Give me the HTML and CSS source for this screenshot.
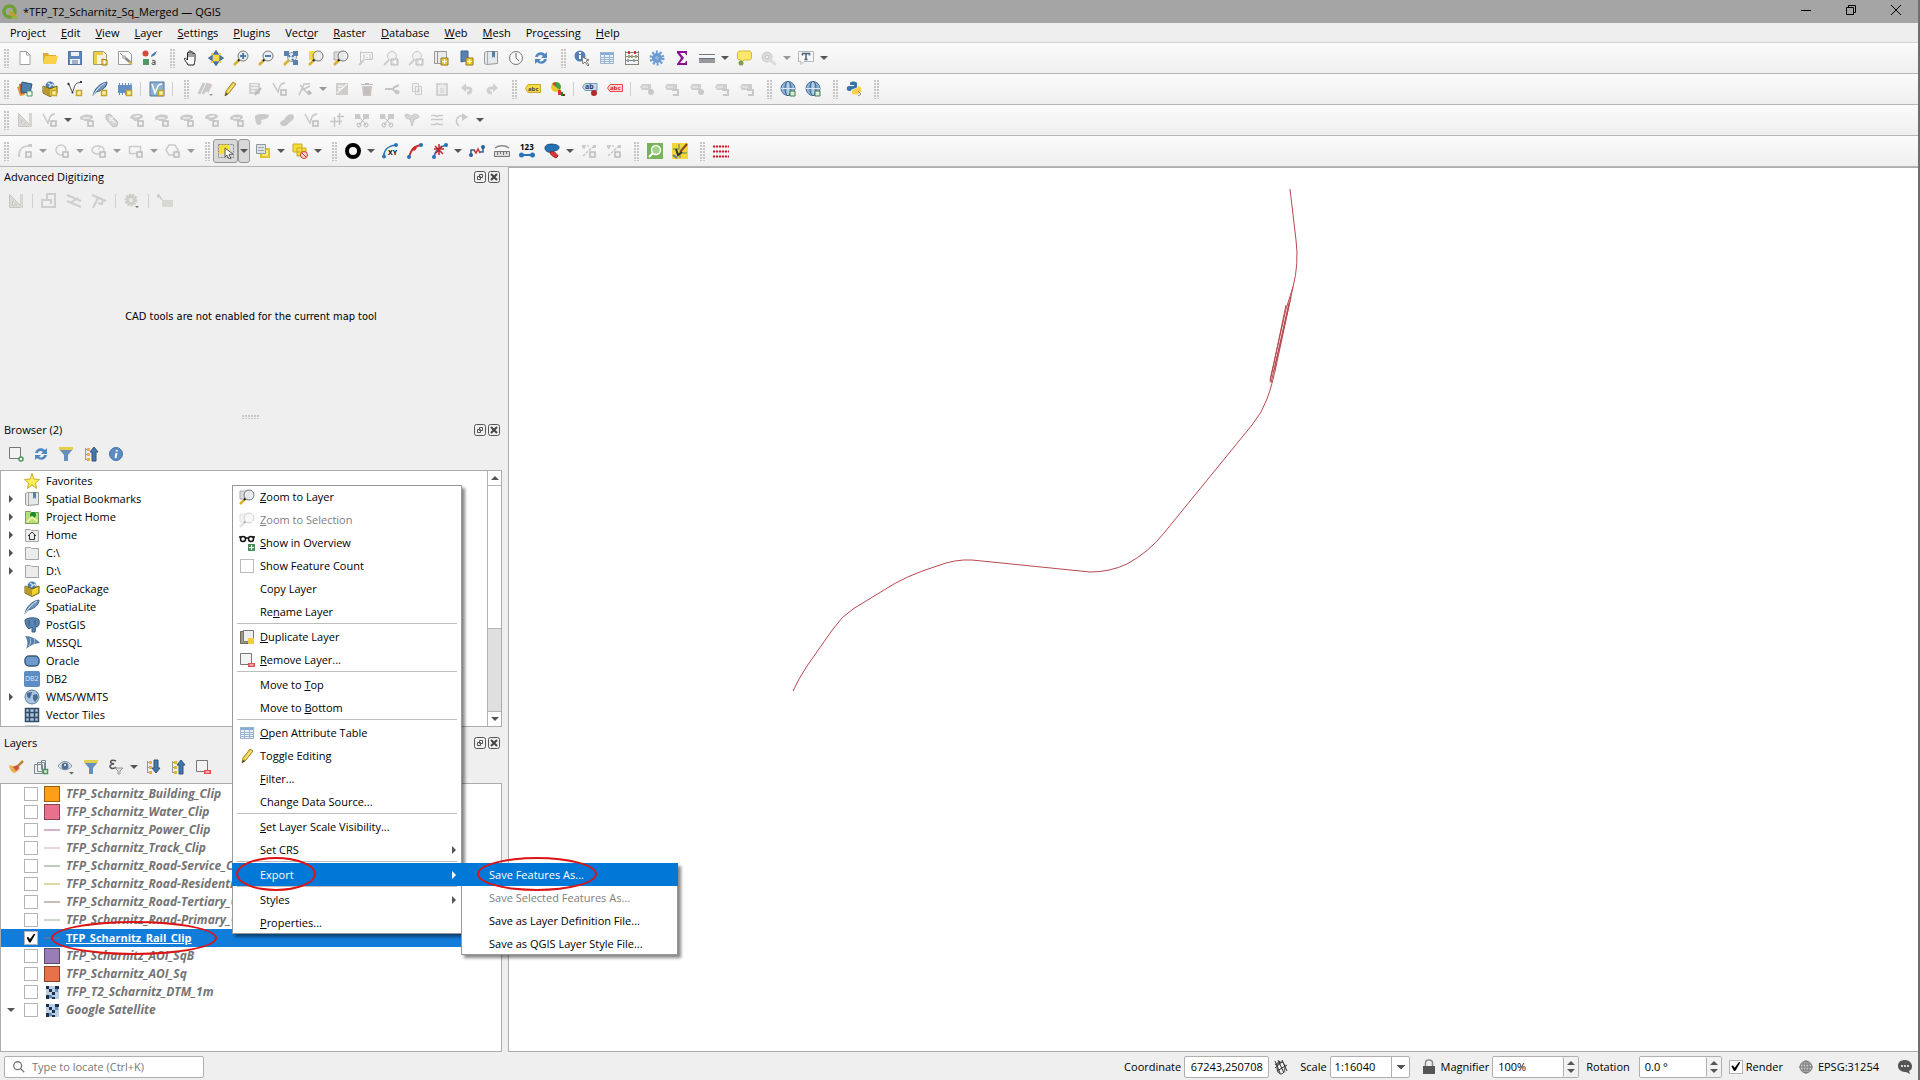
FILE: index.html
```html
<!DOCTYPE html>
<html lang="en">
<head>
<meta charset="utf-8">
<title>*TFP_T2_Scharnitz_Sq_Merged — QGIS</title>
<link rel="stylesheet" href="styles.css">
</head>
<body>
<svg class="defs" aria-hidden="true">
  <symbol id="qgis" viewBox="0 0 16 16"><circle cx="7.500" cy="7.500" r="5.500" fill="none" stroke="#6fa035" stroke-width="3.500"/><path d="M7 7h3l5 5v3h-3L7 10z" fill="#8fb93c"/><path d="M8 8l4 4" stroke="#ee8a2b" stroke-width="2"/></symbol>
  <!-- project -->
  <symbol id="new" viewBox="0 0 16 16"><path d="M3 1.500h6.500l3.500 3.500v9.500H3z" fill="#fff" stroke="#a0a0a0"/><path d="M9.500 1.500V5H13" fill="none" stroke="#a0a0a0"/></symbol>
  <symbol id="open" viewBox="0 0 16 16"><path d="M1 3h5l1 2h7v8H1z" fill="#e0ac2b"/><path d="M3 6h13l-2 8H1z" fill="#fbd14b"/></symbol>
  <symbol id="save" viewBox="0 0 16 16"><path d="M1 1h13l1 1v13H1z" fill="#5c87c0"/><path d="M4 1h8v5H4zM3 9h10v6H3z" fill="#eceff3"/><path d="M5 11h6M5 13h6M1.500 1.500h13v13h-13z" fill="none" stroke="#52749f"/></symbol>
  <symbol id="layout" viewBox="0 0 16 16"><path d="M1.500 1.500h10l3 3v10h-13z" fill="#f7f2df" stroke="#9b9b80"/><path d="M2 2h3v12H2zM2 2h9v3H2z" fill="#f0cd46"/><path d="M10 9l5 1v5h-5z" fill="#f4d33a" stroke="#9a7a16"/><path d="M12.500 10v4M10.500 12h4" stroke="#fff"/></symbol>
  <symbol id="layoutmgr" viewBox="0 0 16 16"><path d="M1.500 1.500h10l3 3v10h-13z" fill="#fbfbfb" stroke="#9a9a9a"/><path d="M3 3l10 10" stroke="#9a9a9a"/><path d="M7 7l7 6" stroke="#888" stroke-width="2.500"/><circle cx="7" cy="7" r="2" fill="#bbb"/><path d="M12 12l3 2" stroke="#e0bd37" stroke-width="2"/></symbol>
  <symbol id="style" viewBox="0 0 16 16"><circle cx="3.500" cy="3.500" r="3" fill="#cf4b3c"/><path d="M1 9h6v6H1z" fill="#4f9a62"/><path d="M9 7c0-3 3-4 6-6-1 3-2 5-6 6z" fill="#4f7ead"/><path d="M10 11c1-1 3-1 3 0v4M13 12.500c-4-.5-4 2.500-1 2l1-1" fill="none" stroke="#444"/></symbol>
  <!-- map navigation -->
  <symbol id="hand" viewBox="0 0 16 16"><path d="M5 15C4 12 1 10 1.500 8.500c1-1 2 .5 3 1.500V3c0-1 1.500-1 1.500 0V1.500c0-1 2-1 2 0v1c0-1 2-1 2 0V4c0-1 2-1 2 0v6c0 2-1 3-1 5z" fill="#fff" stroke="#222"/><path d="M6 3v4M8 2v5M10 3v4" stroke="#444"/></symbol>
  <symbol id="pan" viewBox="0 0 16 16"><path d="M5 5h6v6H5z" fill="#f4d944"/><path d="M8 1l2 3H6zM8 15l2-3H6zM1 8l3-2v4zM15 8l-3-2v4z" fill="#5f82ab" stroke="#4a6d97" stroke-width="1.500"/><path d="M3 3h2v2H3zM11 3h2v2h-2zM3 11h2v2H3zM11 11h2v2h-2z" fill="#f0d040"/></symbol>
  <symbol id="glass" viewBox="0 0 16 16"><path d="M1 15l5-5" stroke="#d8b12d" stroke-width="2.500"/><path d="M5 11l2-2" stroke="#222" stroke-width="2"/><circle cx="10" cy="6" r="5" fill="#e9edf1" fill-opacity=".85" stroke="#777"/></symbol>
  <symbol id="zin" viewBox="0 0 16 16"><use href="#glass"/><path d="M10 3v6M7 6h6" stroke="#4d7cb3" stroke-width="2"/></symbol>
  <symbol id="zout" viewBox="0 0 16 16"><use href="#glass"/><path d="M7 6h6" stroke="#4d7cb3" stroke-width="2"/></symbol>
  <symbol id="zfull" viewBox="0 0 16 16"><path d="M1 15l7-7" stroke="#d8b12d" stroke-width="2.500"/><circle cx="9" cy="7" r="4.500" fill="#e7ebef" stroke="#999"/><path d="M1 1h5v5H1zM10 1h5v5h-5zM10 10h5v5h-5z" fill="#5b80ae"/><path d="M4 4l3 3M12 4L9 7M12 12L9 9" stroke="#5b80ae" stroke-width="2"/></symbol>
  <symbol id="zsel" viewBox="0 0 16 16"><path d="M1 1h8v9H1z" fill="#f5da38"/><use href="#glass"/></symbol>
  <symbol id="zlay" viewBox="0 0 16 16"><path d="M1 2h9v8H1z" fill="#ddd" stroke="#aaa"/><use href="#glass"/></symbol>
  <symbol id="z11" viewBox="0 0 16 16"><path d="M1 15l5-5" stroke="#ccc" stroke-width="2"/><path d="M2.500 1.500v12M2.500 2.500h12v7h-8M6 4v5M9 4v1M9 7v1M12 4v5" stroke="#c4c4c4" fill="none"/></symbol>
  <symbol id="zprev" viewBox="0 0 16 16"><path d="M1 15l5-5" stroke="#ccc" stroke-width="2"/><circle cx="9" cy="6" r="4.500" fill="#f2f2f2" stroke="#c6c6c6"/><path d="M8 9h7v6H8z" fill="#ddd" stroke="#bbb"/><path d="M13 10l-3 2 3 2" fill="#fff"/></symbol>
  <symbol id="newmap" viewBox="0 0 16 16"><path d="M1.500 1.500h12v12h-12z" fill="#eaeaea" stroke="#999"/><path d="M4.500 2v11" stroke="#999"/><path d="M8 8h7v7H8z" fill="#ecc934" stroke="#9a7a16"/><path d="M11.500 9v5M9 11.500h5" stroke="#fff"/></symbol>
  <symbol id="newbm" viewBox="0 0 16 16"><path d="M3 1h7v12l-3-2-4 1z" fill="#5583b9" stroke="#41648e"/><path d="M8 8h7v7H8z" fill="#ecc934" stroke="#9a7a16"/><path d="M11.500 9v5M9 11.500h5" stroke="#fff"/></symbol>
  <symbol id="bm" viewBox="0 0 16 16"><path d="M1.500 2.500l2-1h11v12l-11 1-2-1z" fill="#e6e9ec" stroke="#999"/><path d="M4.500 2v12" stroke="#aaa"/><path d="M9 1h3v7l-1.500-1.500L9 8z" fill="#577fab"/></symbol>
  <symbol id="clock" viewBox="0 0 16 16"><circle cx="8" cy="8" r="6.500" fill="#f8f8f8" stroke="#777"/><path d="M8 3v5l3 3" fill="none" stroke="#666"/></symbol>
  <symbol id="refresh" viewBox="0 0 16 16"><path d="M2 7c1-5 7-6 10-3l2-2v6H8l2-2C8 4 5 5 5 7zM14 9c-1 5-7 6-10 3l-2 2V9h6l-2 2c2 1 5 0 5-2z" fill="#4f87c3"/></symbol>
  <!-- attributes -->
  <symbol id="ident" viewBox="0 0 16 16"><circle cx="6" cy="6" r="5.500" fill="#557fb6"/><path d="M6 2v2M6 5v4" stroke="#fff" stroke-width="2"/><path d="M8 7l7 3-3 1 3 4-1 1-3-4-2 2z" fill="#fff" stroke="#777"/></symbol>
  <symbol id="table" viewBox="0 0 16 16"><path d="M1 2h14v12H1z" fill="#eaf1f8"/><path d="M1 2h14v3H1z" fill="#80aad7"/><path d="M1.500 2.500h13v11h-13zM1 7.500h14M1 9.500h14M1 11.500h14M5.500 2v12M10.500 2v12" fill="none" stroke="#9cb4cd"/></symbol>
  <symbol id="stats" viewBox="0 0 16 16"><path d="M1.500 1v14M14.500 1v14M1 2.500h14M1 6.500h14M1 10.500h14M1 14.500h14" stroke="#87877f"/><path d="M4 2.500h3M10 2.500h3" stroke="#c34" stroke-width="3" stroke-dasharray="2 1"/><path d="M4 6.500h5M11 6.500h2" stroke="#9a7" stroke-width="3" stroke-dasharray="2 1"/><path d="M3 10.500h3M9 10.500h3" stroke="#8aa4ae" stroke-width="3" stroke-dasharray="2 1"/></symbol>
  <symbol id="gear" viewBox="0 0 16 16"><circle cx="8" cy="8" r="4" fill="#6b9bd2" stroke="#6b9bd2" stroke-width="2"/><circle cx="8" cy="8" r="6" fill="none" stroke="#6b9bd2" stroke-width="3" stroke-dasharray="2 1.770"/><circle cx="8" cy="8" r="2" fill="#8eb5de"/></symbol>
  <symbol id="sigma" viewBox="0 0 16 16"><path d="M3 1h10v4h-1l-1-2H6l4 5-4 5h5l1-2h1v4H3v-1l4-6-4-5z" fill="#8a1193"/></symbol>
  <symbol id="measure" viewBox="0 0 16 16"><path d="M0 4.500h16" stroke="#777"/><path d="M0 8h16v5H0z" fill="#999"/><path d="M0 8.500h16" stroke="#5d7590"/></symbol>
  <symbol id="tip" viewBox="0 0 16 16"><path d="M3 1h11l1.500 1.500v6L14 10H8l-4 4 1-4H3L1.500 8.500v-6z" fill="#fae76b" stroke="#d3b938"/><circle cx="5" cy="13" r="2.500" fill="#7f9b54"/></symbol>
  <symbol id="loc" viewBox="0 0 16 16"><circle cx="6" cy="7" r="5" fill="#ddd" stroke="#ccc"/><circle cx="6" cy="7" r="2" fill="#eee" stroke="#c4c4c4"/><path d="M9 10l6 5" stroke="#ddd" stroke-width="3"/></symbol>
  <symbol id="text" viewBox="0 0 16 16"><path d="M.5 1.500h15v10H6l-3 3v-3H.5z" fill="#f5f6f7" stroke="#b2b7bd"/><path d="M4 3.500h8M4.500 3v2.500M11.500 3v2.500M8 4v6M6.500 9.500h3" stroke="#4d6277" stroke-width="1.500"/></symbol>
  <!-- data sources -->
  <symbol id="dsm" viewBox="0 0 16 16"><path d="M0 6l5-1 3 9-5 1z" fill="#e49a2c"/><path d="M2 3l6-1 2 10-6 1z" fill="#c9572e"/><path d="M5 1l10 2-2 9-9-1z" fill="#4c7fae" stroke="#34587d"/><path d="M10 10h5v5h-5z" fill="#eef8ee" stroke="#4a9659"/></symbol>
  <symbol id="gpkg" viewBox="0 0 16 16"><circle cx="8" cy="5" r="4.500" fill="#4c7fae"/><path d="M6 2l3 2-2 2M10 3l2 2" stroke="#d3e2ef" stroke-width="1.500" fill="none"/><path d="M1 5l7 3 7-3v7l-7 3.500L1 12z" fill="#f3d234" stroke="#6b5a11"/><path d="M1 5l7 3.500V15l-7-3.500z" fill="#b9992a"/></symbol>
  <symbol id="plus" viewBox="0 0 16 16"><path d="M9.500 9.500h5v5h-5z" fill="#f9f0a2" stroke="#c3a530" stroke-width="1.500"/></symbol>
  <symbol id="gpkgn" viewBox="0 0 16 16"><use href="#gpkg"/><use href="#plus"/></symbol>
  <symbol id="shp" viewBox="0 0 16 16"><path d="M1.500 2.500l4 9 2-6c1-3 3-4 6-4" fill="none" stroke="#555"/><path d="M1 2l1 2M5 11l1 1M13 1h2" stroke="#335" stroke-width="2"/><use href="#plus"/></symbol>
  <symbol id="feather" viewBox="0 0 16 16"><path d="M1 15C2 8 8 2 15 1c0 5-5 9-11 10z" fill="#7096c0" stroke="#41648e"/><path d="M1 15C4 9 8 5 13 2" stroke="#dfeaf5" fill="none"/></symbol>
  <symbol id="feathern" viewBox="0 0 16 16"><use href="#feather"/><use href="#plus"/></symbol>
  <symbol id="mem" viewBox="0 0 16 16"><path d="M1 4h14v8H1z" fill="#628fc5"/><path d="M2.500 2v12M5.500 2v12M8.500 2v12M11.500 2v12M14 2v8" stroke="#628fc5"/><use href="#plus"/></symbol>
  <symbol id="virt" viewBox="0 0 16 16"><path d="M1 1h14v14H1z" fill="#8ab0d2" stroke="#51789f"/><path d="M3 3l3 9 3-7c1-2 2-2 4-2" fill="none" stroke="#fff" stroke-width="1.500"/><use href="#plus"/></symbol>
  <!-- editing -->
  <symbol id="edits" viewBox="0 0 16 16"><path d="M2 13L7 2M6 13l5-11M10 11l4-8" stroke="#cdc8c8" stroke-width="3"/><path d="M12 13h4l-2 2z" fill="#999"/></symbol>
  <symbol id="pencil" viewBox="0 0 16 16"><path d="M4 10l7-9 3 2-7 9-4 3z" fill="#e9cb46" stroke="#a58a2e"/><path d="M3 15l1-3 2 1z" fill="#333"/><path d="M6 11l6-8" stroke="#fff0a0"/></symbol>
  <symbol id="gsave" viewBox="0 0 16 16"><path d="M2 2h11v11H2z" fill="#d0d0d0"/><path d="M4 4h7M4 7h7M4 10h4" stroke="#f4f4f4" stroke-width="1.500"/><path d="M8 14l6-7" stroke="#bbb" stroke-width="2"/></symbol>
  <symbol id="gplus" viewBox="0 0 16 16"><path d="M9 9h5v5H9z" fill="#f0f0f0" stroke="#bcbcbc" stroke-width="1.500"/></symbol>
  <symbol id="gv" viewBox="0 0 16 16"><path d="M1 2l5 9 2-6c1-2 2-3 5-3" fill="none" stroke="#c6c6c6" stroke-width="1.500"/><use href="#gplus"/></symbol>
  <symbol id="gvtx" viewBox="0 0 16 16"><path d="M2 14L7 3h6M3 4l9 10M5 9l8-4" fill="none" stroke="#c6c6c6" stroke-width="1.500"/><path d="M11 10l3 3" stroke="#bbb" stroke-width="3"/></symbol>
  <symbol id="gmod" viewBox="0 0 16 16"><path d="M2 2h12v12H2z" fill="#cfcdc9"/><path d="M3 12L13 3M4 5h5M4 8h3" stroke="#f4f4f4" stroke-width="1.500"/></symbol>
  <symbol id="gtrash" viewBox="0 0 16 16"><path d="M3 5h10l-1 10H4z" fill="#ccc3c3"/><path d="M2 3.500h12M6 2.500h4M6 7v6M8 7v6M10 7v6" stroke="#bbb"/></symbol>
  <symbol id="gcut" viewBox="0 0 16 16"><path d="M1 8h9M9 7l6-3M9 9l6 3" stroke="#c4c4c4" stroke-width="2"/><circle cx="13" cy="11" r="2" fill="none" stroke="#c4c4c4"/></symbol>
  <symbol id="gcopy" viewBox="0 0 16 16"><path d="M3.500 2.500h6v8h-6zM6.500 5.500h6v8h-6z" fill="#f2f2f2" stroke="#cbcbcb"/><path d="M8 9h3M8 11h3" stroke="#ccc"/></symbol>
  <symbol id="gpaste" viewBox="0 0 16 16"><path d="M3 3h10v11H3z" fill="#ececec" stroke="#c8c8c8" stroke-width="1.500"/><path d="M6 2h4v2H6zM6 7h4v5H6z" fill="#ddd"/></symbol>
  <symbol id="gundo" viewBox="0 0 16 16"><path d="M5 7h4c4 0 4 5-1 5" fill="none" stroke="#cfcfcf" stroke-width="3"/><path d="M2 7l5-5v9z" fill="#cfcfcf"/></symbol>
  <symbol id="gredo" viewBox="0 0 16 16"><path d="M11 7H7c-4 0-4 5 1 5" fill="none" stroke="#cfcfcf" stroke-width="3"/><path d="M14 7L9 2v9z" fill="#cfcfcf"/></symbol>
  <!-- labels -->
  <symbol id="label" viewBox="0 0 16 16"><path d="M3 3.500h12.500v8H3L.5 7.500z" fill="#f5dc43" stroke="#c5a924"/><text x="3" y="10" font-family="Open Sans" font-size="6" font-weight="700" fill="#444">abc</text></symbol>
  <symbol id="diag" viewBox="0 0 16 16"><circle cx="6" cy="6" r="5" fill="#e4cb32"/><path d="M6 6V1a5 5 0 0 1 4 8z" fill="#3da24a"/><path d="M6 6L2 3a5 5 0 0 1 4-2z" fill="#c43"/><path d="M8 9h3v5H8z" fill="#d33"/><path d="M11 11h2v4h-2z" fill="#181"/><path d="M13 13h2v2h-2z" fill="#822"/></symbol>
  <symbol id="abpin" viewBox="0 0 16 16"><path d="M3 2.500h12v7H3L.5 6z" fill="#c8dcf0" stroke="#7598bd"/><text x="3" y="8" font-family="Open Sans" font-size="7" font-weight="700" fill="#335">ab</text><circle cx="12" cy="12" r="3" fill="#b12b2b"/></symbol>
  <symbol id="abred" viewBox="0 0 16 16"><path d="M3 3.500h12.500v7H3L.5 7z" fill="#fbd5d5" stroke="#e84b4b"/><text x="3" y="9" font-family="Open Sans" font-size="6" font-weight="700" fill="#d22">abc</text></symbol>
  <symbol id="glab" viewBox="0 0 16 16"><path d="M3 3h9v6H3L1 6z" fill="#cfcfcf"/><path d="M3 6h6" stroke="#f0f0f0"/><circle cx="12" cy="11" r="3" fill="#c9c9c9"/></symbol>
  <symbol id="glab2" viewBox="0 0 16 16"><path d="M3 3h10v6H3L1 6z" fill="#cfcfcf"/><path d="M3 6h6" stroke="#f0f0f0"/><path d="M8 9h6v5H9" fill="none" stroke="#c8c8c8" stroke-width="2"/></symbol>
  <symbol id="gglobe" viewBox="0 0 16 16"><circle cx="8" cy="7.500" r="7" fill="#8bb1d6" stroke="#4e729a"/><ellipse cx="8" cy="7.500" rx="3" ry="7" fill="none" stroke="#395f87"/><path d="M8 1v13M1 7.500h14" stroke="#dbe8f5"/><path d="M10 10h5v5h-5z" fill="#d9ecd6" stroke="#3f7d4b"/></symbol>
  <symbol id="python" viewBox="0 0 16 16"><path d="M4 2c1-2 6-2 7 0v4c0 2-6 1-6 4H3C0 10 0 5 3 5h5V4H4z" fill="#3a74a8"/><path d="M6 12c1 2 6 2 7 0 3 0 3-6 0-7h-1c0 4-5 2-6 5z" fill="#fbd342"/><path d="M12 10l3 3-3 2" fill="none" stroke="#888"/></symbol>
  <!-- advanced digitizing -->
  <symbol id="gtri" viewBox="0 0 16 16"><path d="M1.500 1.500v13h13z" fill="#dcdad6" stroke="#c6c4c0"/><path d="M12 1h3v14h-3z" fill="#d8d6d2"/><path d="M4.500 8v4h4z" fill="#f1f1f1" stroke="#c6c4c0"/></symbol>
  <symbol id="gblob" viewBox="0 0 16 16"><path d="M1 6c0-4 13-5 13-1 0 3-4 2-5 4H5c0-2-4 0-4-3z" fill="#cacaca"/><path d="M4 6h7" stroke="#eee" stroke-width="1.500"/><use href="#gplus"/></symbol>
  <symbol id="gring" viewBox="0 0 16 16"><path d="M1 5c2-4 12-4 13-1 0 3-4 2-5 5H5C5 6 1 8 1 5z" fill="#cacaca"/><path d="M4 5c2-1 6-2 7-1 0 1-4 2-7 1z" fill="#f4f4f4"/><use href="#gplus"/></symbol>
  <symbol id="gsimp" viewBox="0 0 16 16"><path d="M2 3l4-1 8 8-1 4-4 1-7-8z" fill="#d3d3d3" stroke="#c0c0c0"/><path d="M5 5l6 6M9 5l-3 4" stroke="#f0f0f0" stroke-width="1.500"/></symbol>
  <symbol id="gfill" viewBox="0 0 16 16"><path d="M1 4c3-3 12-2 14-1 0 4-4 4-8 5 1 2 0 5-2 5-3 0-4-5-4-9z" fill="#cacaca"/></symbol>
  <symbol id="gbean" viewBox="0 0 16 16"><path d="M1 11c1-3 4-2 5-5 2-4 8-5 9-2 0 5-4 5-6 8-3 4-8 2-8-1z" fill="#cacaca"/></symbol>
  <symbol id="gsplit" viewBox="0 0 16 16"><path d="M1 2h5l1 5H1zM9 2h6v5H9z" fill="#cacaca"/><path d="M7 7l5 6M10 7l-5 6" stroke="#bbb"/><circle cx="5" cy="13" r="2" fill="none" stroke="#bbb"/><circle cx="12" cy="13" r="2" fill="none" stroke="#bbb"/></symbol>
  <symbol id="gtrim" viewBox="0 0 16 16"><path d="M1 9.500h12M5.500 5v10M10.500 1v12M8 4.500h7" fill="none" stroke="#c6c6c6" stroke-width="1.500"/></symbol>
  <symbol id="gmerge" viewBox="0 0 16 16"><path d="M1 3c3-3 5 3 8 0 3-2 6 0 6 2-2 2-4 1-5 3l-2 6-2-7C3 7 1 6 1 3z" fill="#d6d6d6" stroke="#c4c4c4"/></symbol>
  <symbol id="goff" viewBox="0 0 16 16"><path d="M2 3.500h4l2 1 2-1h4M2 7.500h12M2 12.500h4l2-1 2 1h4" fill="none" stroke="#c9c9c9" stroke-width="1.500"/></symbol>
  <symbol id="grot" viewBox="0 0 16 16"><path d="M5 14C0 9 3 3 10 4" fill="none" stroke="#c9c9c9" stroke-width="1.500"/><path d="M8 1l6 4-6 4z" fill="#c9c9c9"/></symbol>
  <!-- shape digitizing -->
  <symbol id="garc" viewBox="0 0 16 16"><path d="M2 12C2 6 6 3 12 3" fill="none" stroke="#cacaca" stroke-width="1.500"/><path d="M1 11h2v3H1zM11 1h4v3h-4z" fill="#cacaca"/><use href="#gplus"/></symbol>
  <symbol id="gcirc" viewBox="0 0 16 16"><circle cx="7" cy="7" r="5" fill="none" stroke="#cacaca" stroke-width="1.500"/><use href="#gplus"/></symbol>
  <symbol id="gell" viewBox="0 0 16 16"><ellipse cx="7" cy="7" rx="6" ry="4" fill="none" stroke="#cacaca" stroke-width="1.500"/><path d="M7 7l3-4" stroke="#ccc"/><use href="#gplus"/></symbol>
  <symbol id="grect" viewBox="0 0 16 16"><path d="M1.500 3.500h11v7h-11z" fill="none" stroke="#cacaca" stroke-width="1.500"/><use href="#gplus"/></symbol>
  <symbol id="gpoly" viewBox="0 0 16 16"><path d="M4 2h6l3 5-3 5H4L1 7z" fill="none" stroke="#cacaca" stroke-width="1.500"/><use href="#gplus"/></symbol>
  <!-- selection -->
  <symbol id="select" viewBox="0 0 16 16"><path d="M1 1h10v10H1z" fill="#f6dd37"/><path d="M.5 1.500h15v13H.5z" fill="none" stroke="#888" stroke-dasharray="2 1"/><path d="M7 5l8 6-4 .5 2 4-2 .5-2-4-2 2z" fill="#fff" stroke="#555"/></symbol>
  <symbol id="selval" viewBox="0 0 16 16"><path d="M6 6h8v8H6z" fill="#fbeb7c" stroke="#e2c52b" stroke-width="2"/><path d="M1.500 1.500h9v9h-9z" fill="#dfe3e6" stroke="#8f979f"/><path d="M3 4.500h6M3 7.500h6" stroke="#9aa"/></symbol>
  <symbol id="desel" viewBox="0 0 16 16"><path d="M1 1h9v8H1zM5 5h9v8H5z" fill="#f6dd37" stroke="#c4a927"/><circle cx="12" cy="12" r="3.500" fill="#f9d5d0" stroke="#d8342f"/><path d="M10 10l4 4" stroke="#d8342f"/></symbol>
  <symbol id="ring" viewBox="0 0 16 16"><circle cx="8" cy="8" r="6" fill="none" stroke="#000" stroke-width="4"/></symbol>
  <symbol id="xy" viewBox="0 0 16 16"><path d="M1.500 14C2 7 5 3 14 2" fill="none" stroke="#2a72b5" stroke-width="1.500"/><circle cx="2" cy="13.500" r="2" fill="#2a72b5"/><circle cx="14" cy="2" r="2" fill="#2a72b5"/><text x="6" y="12" font-family="Open Sans" font-size="7" font-weight="700">XY</text></symbol>
  <symbol id="arc" viewBox="0 0 16 16"><path d="M2 14C4 8 5 4 14 2" fill="none" stroke="#c33" stroke-width="2"/><circle cx="2" cy="14" r="2" fill="#2a72b5"/><circle cx="14" cy="2" r="2" fill="#2a72b5"/><path d="M6 7l3-3" stroke="#c22" stroke-width="3"/></symbol>
  <symbol id="cross" viewBox="0 0 16 16"><path d="M2 14C3 8 7 4 14 2" stroke="#2a72b5" stroke-width="1.500" fill="none"/><path d="M7 1v11M2 6h10M3 3l8 8M10 3l-6 7" stroke="#bd2727" stroke-width="1.500"/><circle cx="2" cy="14" r="2" fill="#2a72b5"/><circle cx="14" cy="2" r="2" fill="#2a72b5"/></symbol>
  <symbol id="split" viewBox="0 0 16 16"><path d="M2 12V7h4M14 4v5h-4" fill="none" stroke="#2a5f9b" stroke-width="1.500"/><path d="M5 7l2 3 2-4 2 4" fill="none" stroke="#c33" stroke-width="1.500"/><circle cx="2" cy="12" r="2" fill="#2a5f9b"/><circle cx="14" cy="4" r="2" fill="#2a5f9b"/></symbol>
  <symbol id="ruler" viewBox="0 0 16 16"><path d="M1 5c4-3 10-3 14 0" fill="none" stroke="#888" stroke-width="1.500"/><path d="M.5 8.500h15v5H.5z" fill="#ddd" stroke="#777"/><path d="M3.500 9v3M6.500 9v2M9.500 9v3M12.500 9v2" stroke="#777"/></symbol>
  <symbol id="num" viewBox="0 0 16 16"><text x="1" y="7" font-family="Open Sans" font-size="8" font-weight="700">123</text><path d="M2 12h12" stroke="#2a72b5" stroke-width="2"/><circle cx="2.500" cy="12" r="2.500" fill="#2a72b5"/><circle cx="13.500" cy="12" r="2.500" fill="#2a72b5"/></symbol>
  <symbol id="blobs" viewBox="0 0 16 16"><path d="M1 5c0-6 14-4 14-1 0 4-4 3-6 5-3 1-8 0-8-4z" fill="#2472b3" stroke="#194f7c"/><path d="M6 9c3-1 6 0 8 4l-2 2c-2-1-6-3-6-6z" fill="#dc3434" stroke="#9b2323"/></symbol>
  <symbol id="gnet" viewBox="0 0 16 16"><path d="M2 3h6M2 13l11-10M3 3v4" stroke="#cacaca" stroke-width="1.500" stroke-dasharray="3 1"/><path d="M1 2h3v3H1zM12 2h3v3h-3z" fill="#cacaca"/><use href="#gplus"/></symbol>
  <symbol id="gfind" viewBox="0 0 16 16"><path d="M0 0h16v16H0z" fill="#75b457"/><circle cx="9" cy="7" r="4.500" fill="#a4d08e" stroke="#fff" stroke-width="1.500"/><path d="M2 14l4-4" stroke="#fff" stroke-width="2"/></symbol>
  <symbol id="mapedit" viewBox="0 0 16 16"><path d="M0 0h16v16H0z" fill="#f1d53d"/><path d="M1 6h6V1M8 15v-5h7" fill="none" stroke="#7fa552" stroke-width="1.500"/><path d="M1 12l4 3" stroke="#57a" stroke-width="2"/><path d="M8 9l7-8" stroke="#8c4520" stroke-width="2"/><path d="M4 6l2 6 4-3" fill="none" stroke="#333" stroke-width="2"/></symbol>
  <symbol id="dots" viewBox="0 0 16 16"><path d="M0 3.500h16M0 8.500h16M0 13.500h16" stroke="#f0b5bb"/><path d="M0 3.500h16M0 8.500h16M0 13.500h16" stroke="#cb1c2f" stroke-width="2" stroke-dasharray="2 1"/></symbol>
  <symbol id="gcad" viewBox="0 0 16 16"><path d="M6 1h8v13H1V7h5zM1 7h9v4" fill="none" stroke="#d0cecb" stroke-width="2"/></symbol>
  <symbol id="gpar" viewBox="0 0 16 16"><path d="M1 2l14 6M1 8l14 6M4 10l8-5" stroke="#d0cecb" stroke-width="2"/></symbol>
  <symbol id="gperp" viewBox="0 0 16 16"><path d="M1 2l14 6M2 15L7 5M7 10l4 1 1-4" fill="none" stroke="#d0cecb" stroke-width="2"/></symbol>
  <symbol id="ggear" viewBox="0 0 16 16"><circle cx="7" cy="7" r="5" fill="#d0cec6" stroke="#d0cec6" stroke-width="3" stroke-dasharray="2 1"/><circle cx="7" cy="7" r="2" fill="#e9e9e9"/><path d="M11 13h4l-2 2z" fill="#777"/></symbol>
  <symbol id="gfloat" viewBox="0 0 16 16"><path d="M1 1l4 6M1 1v4" stroke="#ccc" stroke-width="1.500"/><path d="M5 7h11v7H5z" fill="#d8d8d3"/></symbol>
  <!-- panels -->
  <symbol id="addl" viewBox="0 0 16 16"><path d="M1.500 1.500h11v11h-11z" fill="#f3f3f3" stroke="#777"/><circle cx="13" cy="13" r="2" fill="#fff" stroke="#4a9659" stroke-width="1.500"/></symbol>
  <symbol id="filter" viewBox="0 0 16 16"><path d="M1 3h14l-5 6v6H6V9z" fill="#648fbd"/><path d="M1 1h14v3H1z" fill="#e3cf4e"/></symbol>
  <symbol id="up" viewBox="0 0 16 16"><path d="M2.500 2v12M2 3.500h4M2 8.500h4M2 13.500h4" stroke="#999"/><path d="M4 2h3v3H4zM4 7h3v3H4zM4 12h3v3H4z" fill="#e7b13d"/><path d="M11 1l4 5h-2v9H9V6H7z" fill="#4577a8" stroke="#2f5377"/></symbol>
  <symbol id="down" viewBox="0 0 16 16"><path d="M2.500 2v12M2 3.500h4M2 8.500h4M2 13.500h4" stroke="#999"/><path d="M4 2h3v3H4zM4 7h3v3H4zM4 12h3v3H4z" fill="#e7b13d"/><path d="M11 14l4-5h-2V1H9v8H7z" fill="#4577a8" stroke="#2f5377"/></symbol>
  <symbol id="info" viewBox="0 0 16 16"><circle cx="8" cy="8" r="6.500" fill="#5d8cc3" stroke="#4674a9"/><path d="M9 4l-.5 1.500M8.500 7L7.500 12" stroke="#fff" stroke-width="2"/></symbol>
  <symbol id="brush" viewBox="0 0 16 16"><path d="M9 8l6-6" stroke="#b98735" stroke-width="2.500"/><path d="M1 6l4 1 5-1 2 4-5 4c-3 0-5-3-6-8z" fill="#ecb04d"/><path d="M5 8l5-2 1 3-3 3z" fill="#c9514a"/></symbol>
  <symbol id="group" viewBox="0 0 16 16"><path d="M1.500 5.500h8v9h-8zM4.500 3.500h7v9h-7zM8.500 1.500h4v9h-4z" fill="none" stroke="#7b8a90"/><path d="M10.500 10.500h4v4h-4z" fill="#eef8ee" stroke="#4a9659" stroke-width="1.500"/></symbol>
  <symbol id="eye" viewBox="0 0 16 16"><path d="M0 7c4-6 10-6 14 0-4 5-10 5-14 0z" fill="#dde3e9" stroke="#83909e"/><circle cx="7" cy="7" r="3.500" fill="#4c6f93"/><circle cx="7" cy="6" r="1" fill="#fff"/><path d="M11 13h5l-2.500 2.500z" fill="#666"/></symbol>
  <symbol id="expr" viewBox="0 0 16 16"><path d="M8 2C4 0 2 2 3 4l3 1C2 5 1 8 3 9c2 1 4 0 5-1" fill="none" stroke="#555" stroke-width="1.500"/><path d="M7 9h8l-3 3v3h-2v-3z" fill="#ddd" stroke="#999"/></symbol>
  <symbol id="rem" viewBox="0 0 16 16"><path d="M1.500 1.500h11v11h-11z" fill="#f3f3f3" stroke="#777"/><path d="M9 11h7v4H9z" fill="#e05252"/><path d="M10.500 13h4" stroke="#fff"/></symbol>
  <symbol id="star" viewBox="0 0 16 16"><path d="M8 .5l2 5.500 5.500.5-4 3.500 1 5.500L8 12l-4.500 3.500 1-5.500-4-3.500L6 6z" fill="#fdee58" stroke="#c9aa2c"/></symbol>
  <symbol id="phome" viewBox="0 0 16 16"><path d="M1.500 2.500h5l1 1h7v11h-13z" fill="#b5e07d" stroke="#7c9d58"/><circle cx="9" cy="6" r="3" fill="#1b8a2e"/><path d="M3 13l5-5 5 4" stroke="#f4f0a0" stroke-width="2" fill="none"/></symbol>
  <symbol id="folder" viewBox="0 0 16 16"><path d="M1.500 2.500h5l1 1h7v11h-13z" fill="#ececec" stroke="#a4a4a4"/></symbol>
  <symbol id="home" viewBox="0 0 16 16"><use href="#folder"/><path d="M4 9l4-4 4 4M5.500 8v4.500h5V8" fill="none" stroke="#333"/></symbol>
  <symbol id="pg" viewBox="0 0 16 16"><path d="M1 3c3-3 12-3 14 0 1 4-1 7-2 7l-1-1-1 6H8v-5L5 12C2 10 1 6 1 3z" fill="#5b84b1" stroke="#355a80"/><path d="M5 3v6M11 3v5" stroke="#355a80"/></symbol>
  <symbol id="mssql" viewBox="0 0 16 16"><path d="M1 1c6 0 12 3 15 7-4 0-10 2-14 6 2-4 2-9-1-13z" fill="#587fa9"/><path d="M6 3c1 3 1 5-1 8M10 4c1 2 1 3 0 5" stroke="#a9c3dd" fill="none"/></symbol>
  <symbol id="oracle" viewBox="0 0 16 16"><rect x="1" y="3" width="14" height="10" rx="4" fill="#6d99cb" stroke="#3c5a7b" stroke-width="1.500"/></symbol>
  <symbol id="db2" viewBox="0 0 16 16"><rect width="16" height="16" rx="2" fill="#5b8cc4"/><text x="1" y="10" font-family="Open Sans" font-size="7" fill="#dbe8f5">DB2</text></symbol>
  <symbol id="wms" viewBox="0 0 16 16"><circle cx="8" cy="8" r="7" fill="#a9c5e0" stroke="#5c7fa4"/><path d="M3 4l5-1-1 4-2 3-2-3zM9 6l4-1 1 4-3 4-2-3z" fill="#476d94"/></symbol>
  <symbol id="grid" viewBox="0 0 16 16"><path d="M1.500 1.500h13v13h-13z" fill="#a8c2de"/><path d="M1.500 1v14M5.500 1v14M10.500 1v14M14.500 1v14M1 1.500h14M1 5.500h14M1 10.500h14M1 14.500h14" stroke="#334a63" stroke-width="1.500"/></symbol>
  <symbol id="raster" viewBox="0 0 16 16"><path d="M2 2h13v13H2z" fill="#b9cfe4"/><path d="M2 2h3v3H2zM11 2h4v3h-4zM5 5h3v3H5zM8 8h3v3H8zM2 11h3v4H2zM8 13h3v2H8z" fill="#1e2f4d"/><path d="M5 11h3v3H5zM11 5h3v3h-3z" fill="#6b90b9"/></symbol>
  <symbol id="glasses" viewBox="0 0 16 16"><circle cx="4" cy="4" r="2.500" fill="none" stroke="#111" stroke-width="1.500"/><circle cx="12" cy="4" r="2.500" fill="none" stroke="#111" stroke-width="1.500"/><path d="M0 2h2M14 2h2M6 3h4" stroke="#111" stroke-width="1.500"/><path d="M9 9h7v7H9z" fill="#4f8a5b"/><path d="M12.500 10v5M10 12.500h5" stroke="#fff"/></symbol>
  <symbol id="dup" viewBox="0 0 16 16"><path d="M1.500 2.500h11v12h-11z" fill="#9a9a82" stroke="#66665a"/><path d="M4.500 1.500h10v11h-10z" fill="#eee" stroke="#777"/><path d="M9 9h6v6H9z" fill="#f0cf3d"/></symbol>
  <symbol id="tri-d" viewBox="0 0 8 8"><path d="M0 2h8L4 6z" fill="currentColor"/></symbol>
  <symbol id="tri-u" viewBox="0 0 8 8"><path d="M0 6h8L4 2z" fill="currentColor"/></symbol>
  <symbol id="tri-r" viewBox="0 0 8 8"><path d="M2 0l4 4-4 4z" fill="currentColor"/></symbol>
  <symbol id="float" viewBox="0 0 12 12"><rect x=".5" y=".5" width="11" height="11" rx="2" fill="none" stroke="#555"/><path d="M5.500 3.500h3v3h-3zM3.500 5.500h3v3h-3z" fill="#efefef" stroke="#555"/></symbol>
  <symbol id="close" viewBox="0 0 12 12"><rect x=".5" y=".5" width="11" height="11" rx="2" fill="none" stroke="#555"/><path d="M3 3l6 6M9 3L3 9" stroke="#444" stroke-width="2"/></symbol>
</svg>

<header class="titlebar">
  <svg class="ic"><use href="#qgis"/></svg>
  <h1>*TFP_T2_Scharnitz_Sq_Merged — QGIS</h1>
  <div class="winctl">
    <button aria-label="Minimize"><svg viewBox="0 0 12 12"><path d="M1 6.500h10" stroke="#000"/></svg></button>
    <button aria-label="Restore"><svg viewBox="0 0 12 12"><path d="M1.500 3.500h7v7h-7zM3.500 3.500v-2h7v7h-2" fill="none" stroke="#000"/></svg></button>
    <button aria-label="Close"><svg viewBox="0 0 12 12"><path d="M1 1l10 10M11 1L1 11" stroke="#000"/></svg></button>
  </div>
</header>

<nav class="menubar">
  <button>Pro<u>j</u>ect</button><button><u>E</u>dit</button><button><u>V</u>iew</button><button><u>L</u>ayer</button><button><u>S</u>ettings</button><button><u>P</u>lugins</button><button>Vect<u>o</u>r</button><button><u>R</u>aster</button><button><u>D</u>atabase</button><button><u>W</u>eb</button><button><u>M</u>esh</button><button>Pro<u>c</u>essing</button><button><u>H</u>elp</button>
</nav>

<div class="toolbar" role="toolbar">
  <i class="grip"></i>
  <button aria-label="New Project"><svg><use href="#new"/></svg></button>
  <button aria-label="Open Project"><svg><use href="#open"/></svg></button>
  <button aria-label="Save Project"><svg><use href="#save"/></svg></button>
  <button aria-label="New Print Layout"><svg><use href="#layout"/></svg></button>
  <button aria-label="Layout Manager"><svg><use href="#layoutmgr"/></svg></button>
  <button aria-label="Style Manager"><svg><use href="#style"/></svg></button>
  <i class="grip"></i>
  <button aria-label="Pan Map"><svg><use href="#hand"/></svg></button>
  <button aria-label="Pan to Selection"><svg><use href="#pan"/></svg></button>
  <button aria-label="Zoom In"><svg><use href="#zin"/></svg></button>
  <button aria-label="Zoom Out"><svg><use href="#zout"/></svg></button>
  <button aria-label="Zoom Full"><svg><use href="#zfull"/></svg></button>
  <button aria-label="Zoom to Selection"><svg><use href="#zsel"/></svg></button>
  <button aria-label="Zoom to Layer"><svg><use href="#zlay"/></svg></button>
  <button aria-label="Zoom to Native Resolution" disabled><svg><use href="#z11"/></svg></button>
  <button aria-label="Zoom Last" disabled><svg><use href="#zprev"/></svg></button>
  <button aria-label="Zoom Next" disabled><svg><use href="#zprev"/></svg></button>
  <button aria-label="New Map View"><svg><use href="#newmap"/></svg></button>
  <button aria-label="New Bookmark"><svg><use href="#newbm"/></svg></button>
  <button aria-label="Show Bookmarks"><svg><use href="#bm"/></svg></button>
  <button aria-label="Temporal Controller"><svg><use href="#clock"/></svg></button>
  <button aria-label="Refresh"><svg><use href="#refresh"/></svg></button>
  <i class="grip"></i>
  <button aria-label="Identify Features"><svg><use href="#ident"/></svg></button>
  <button aria-label="Attribute Table"><svg><use href="#table"/></svg></button>
  <button aria-label="Field Calculator"><svg><use href="#stats"/></svg></button>
  <button aria-label="Toolbox"><svg><use href="#gear"/></svg></button>
  <button aria-label="Statistical Summary"><svg><use href="#sigma"/></svg></button>
  <button aria-label="Measure"><svg><use href="#measure"/></svg></button>
  <button class="dd" aria-label="Measure options"><svg><use href="#tri-d"/></svg></button>
  <button aria-label="Map Tips"><svg><use href="#tip"/></svg></button>
  <button aria-label="Actions" disabled><svg><use href="#loc"/></svg></button>
  <button class="dd" aria-label="Action options" disabled><svg><use href="#tri-d"/></svg></button>
  <button aria-label="Text Annotation"><svg><use href="#text"/></svg></button>
  <button class="dd" aria-label="Annotation options"><svg><use href="#tri-d"/></svg></button>
</div>

<div class="toolbar" role="toolbar">
  <i class="grip"></i>
  <button aria-label="Data Source Manager"><svg><use href="#dsm"/></svg></button>
  <button aria-label="New GeoPackage Layer"><svg><use href="#gpkgn"/></svg></button>
  <button aria-label="New Shapefile Layer"><svg><use href="#shp"/></svg></button>
  <button aria-label="New SpatiaLite Layer"><svg><use href="#feathern"/></svg></button>
  <button aria-label="New Scratch Layer"><svg><use href="#mem"/></svg></button>
  <i class="sep"></i>
  <button aria-label="New Virtual Layer"><svg><use href="#virt"/></svg></button>
  <i class="sep"></i>
  <i class="grip"></i>
  <button aria-label="Current Edits" disabled><svg><use href="#edits"/></svg></button>
  <button aria-label="Toggle Editing"><svg><use href="#pencil"/></svg></button>
  <button aria-label="Save Edits" disabled><svg><use href="#gsave"/></svg></button>
  <button aria-label="Add Feature" disabled><svg><use href="#gv"/></svg></button>
  <button aria-label="Vertex Tool" disabled><svg><use href="#gvtx"/></svg></button>
  <button class="dd" aria-label="Vertex options" disabled><svg><use href="#tri-d"/></svg></button>
  <button aria-label="Modify Attributes" disabled><svg><use href="#gmod"/></svg></button>
  <button aria-label="Delete Selected" disabled><svg><use href="#gtrash"/></svg></button>
  <button aria-label="Cut Features" disabled><svg><use href="#gcut"/></svg></button>
  <button aria-label="Copy Features" disabled><svg><use href="#gcopy"/></svg></button>
  <button aria-label="Paste Features" disabled><svg><use href="#gpaste"/></svg></button>
  <button aria-label="Undo" disabled><svg><use href="#gundo"/></svg></button>
  <button aria-label="Redo" disabled><svg><use href="#gredo"/></svg></button>
  <i class="grip"></i>
  <button aria-label="Layer Labeling"><svg><use href="#label"/></svg></button>
  <button aria-label="Layer Diagrams"><svg><use href="#diag"/></svg></button>
  <i class="sep"></i>
  <button aria-label="Highlight Pinned Labels"><svg><use href="#abpin"/></svg></button>
  <button aria-label="Show Unplaced Labels"><svg><use href="#abred"/></svg></button>
  <i class="sep"></i>
  <button aria-label="Pin Labels" disabled><svg><use href="#glab"/></svg></button>
  <button aria-label="Show Labels" disabled><svg><use href="#glab2"/></svg></button>
  <button aria-label="Move Label" disabled><svg><use href="#glab"/></svg></button>
  <button aria-label="Rotate Label" disabled><svg><use href="#glab2"/></svg></button>
  <button aria-label="Change Label" disabled><svg><use href="#glab2"/></svg></button>
  <i class="grip"></i>
  <button aria-label="Quick Map Services"><svg><use href="#gglobe"/></svg></button>
  <button aria-label="Search Map Services"><svg><use href="#gglobe"/></svg></button>
  <i class="grip"></i>
  <button aria-label="Python Console"><svg><use href="#python"/></svg></button>
  <i class="grip"></i>
</div>

<div class="toolbar" role="toolbar">
  <i class="grip"></i>
  <button aria-label="Enable Advanced Digitizing" disabled><svg><use href="#gtri"/></svg></button>
  <button aria-label="Move Feature" disabled><svg><use href="#gv"/></svg></button>
  <button class="dd" aria-label="Move options"><svg><use href="#tri-d"/></svg></button>
  <button aria-label="Rotate Feature" disabled><svg><use href="#gblob"/></svg></button>
  <button aria-label="Simplify Feature" disabled><svg><use href="#gsimp"/></svg></button>
  <button aria-label="Add Ring" disabled><svg><use href="#gring"/></svg></button>
  <button aria-label="Add Part" disabled><svg><use href="#gblob"/></svg></button>
  <button aria-label="Fill Ring" disabled><svg><use href="#gblob"/></svg></button>
  <button aria-label="Delete Ring" disabled><svg><use href="#gring"/></svg></button>
  <button aria-label="Delete Part" disabled><svg><use href="#gblob"/></svg></button>
  <button aria-label="Reshape Features" disabled><svg><use href="#gfill"/></svg></button>
  <button aria-label="Offset Curve" disabled><svg><use href="#gbean"/></svg></button>
  <button aria-label="Reverse Line" disabled><svg><use href="#gv"/></svg></button>
  <button aria-label="Trim or Extend" disabled><svg><use href="#gtrim"/></svg></button>
  <button aria-label="Split Features" disabled><svg><use href="#gsplit"/></svg></button>
  <button aria-label="Split Parts" disabled><svg><use href="#gsplit"/></svg></button>
  <button aria-label="Merge Features" disabled><svg><use href="#gmerge"/></svg></button>
  <button aria-label="Merge Attributes" disabled><svg><use href="#goff"/></svg></button>
  <button aria-label="Rotate Point Symbols" disabled><svg><use href="#grot"/></svg></button>
  <button class="dd" aria-label="Rotate options"><svg><use href="#tri-d"/></svg></button>
</div>

<div class="toolbar" role="toolbar">
  <i class="grip"></i>
  <button aria-label="Circular String" disabled><svg><use href="#garc"/></svg></button>
  <button class="dd" aria-label="String options" disabled><svg><use href="#tri-d"/></svg></button>
  <button aria-label="Circle" disabled><svg><use href="#gcirc"/></svg></button>
  <button class="dd" aria-label="Circle options" disabled><svg><use href="#tri-d"/></svg></button>
  <button aria-label="Ellipse" disabled><svg><use href="#gell"/></svg></button>
  <button class="dd" aria-label="Ellipse options" disabled><svg><use href="#tri-d"/></svg></button>
  <button aria-label="Rectangle" disabled><svg><use href="#grect"/></svg></button>
  <button class="dd" aria-label="Rectangle options" disabled><svg><use href="#tri-d"/></svg></button>
  <button aria-label="Regular Polygon" disabled><svg><use href="#gpoly"/></svg></button>
  <button class="dd" aria-label="Polygon options" disabled><svg><use href="#tri-d"/></svg></button>
  <i class="grip"></i>
  <button class="on" aria-label="Select Features"><svg><use href="#select"/></svg></button>
  <button class="dd on" aria-label="Select options"><svg><use href="#tri-d"/></svg></button>
  <button aria-label="Select by Value"><svg><use href="#selval"/></svg></button>
  <button class="dd" aria-label="Select by Value options"><svg><use href="#tri-d"/></svg></button>
  <button aria-label="Deselect Features"><svg><use href="#desel"/></svg></button>
  <button class="dd" aria-label="Deselect options"><svg><use href="#tri-d"/></svg></button>
  <i class="grip"></i>
  <button aria-label="Circle Tool"><svg><use href="#ring"/></svg></button>
  <button class="dd" aria-label="Circle Tool options"><svg><use href="#tri-d"/></svg></button>
  <button aria-label="Coordinates"><svg><use href="#xy"/></svg></button>
  <button aria-label="Arc"><svg><use href="#arc"/></svg></button>
  <button aria-label="Intersection"><svg><use href="#cross"/></svg></button>
  <button class="dd" aria-label="Intersection options"><svg><use href="#tri-d"/></svg></button>
  <button aria-label="Split Line"><svg><use href="#split"/></svg></button>
  <button aria-label="Line Length"><svg><use href="#ruler"/></svg></button>
  <button aria-label="Numbering"><svg><use href="#num"/></svg></button>
  <button aria-label="Divide Polygon"><svg><use href="#blobs"/></svg></button>
  <button class="dd" aria-label="Divide options"><svg><use href="#tri-d"/></svg></button>
  <button aria-label="Network" disabled><svg><use href="#gnet"/></svg></button>
  <button aria-label="Network Nodes" disabled><svg><use href="#gnet"/></svg></button>
  <i class="grip"></i>
  <button aria-label="OSM Place Search"><svg><use href="#gfind"/></svg></button>
  <button aria-label="Map Editor"><svg><use href="#mapedit"/></svg></button>
  <i class="grip"></i>
  <button aria-label="Profile Lines"><svg><use href="#dots"/></svg></button>
</div>

<main class="work">
  <aside class="side">
    <section class="dock dock-cad">
      <header><h2>Advanced Digitizing</h2><button aria-label="Float"><svg><use href="#float"/></svg></button><button aria-label="Close"><svg><use href="#close"/></svg></button></header>
      <div class="tools">
        <button aria-label="Enable" disabled><svg><use href="#gtri"/></svg></button><i class="sep"></i>
        <button aria-label="Construction" disabled><svg><use href="#gcad"/></svg></button>
        <button aria-label="Parallel" disabled><svg><use href="#gpar"/></svg></button>
        <button aria-label="Perpendicular" disabled><svg><use href="#gperp"/></svg></button><i class="sep"></i>
        <button aria-label="Snapping" disabled><svg><use href="#ggear"/></svg></button><i class="sep"></i>
        <button aria-label="Floater" disabled><svg><use href="#gfloat"/></svg></button>
      </div>
      <p class="note">CAD tools are not enabled for the current map tool</p>
      <i class="split"></i>
    </section>

    <section class="dock dock-browser">
      <header><h2>Browser (2)</h2><button aria-label="Float"><svg><use href="#float"/></svg></button><button aria-label="Close"><svg><use href="#close"/></svg></button></header>
      <div class="tools">
        <button aria-label="Add Layers"><svg><use href="#addl"/></svg></button>
        <button aria-label="Refresh"><svg><use href="#refresh"/></svg></button>
        <button aria-label="Filter"><svg><use href="#filter"/></svg></button>
        <button aria-label="Collapse All"><svg><use href="#up"/></svg></button>
        <button aria-label="Properties"><svg><use href="#info"/></svg></button>
      </div>
      <div class="view">
        <ul class="tree">
          <li><i class="tw"></i><svg class="ic"><use href="#star"/></svg><span>Favorites</span></li>
          <li><svg class="tw"><use href="#tri-r"/></svg><svg class="ic"><use href="#bm"/></svg><span>Spatial Bookmarks</span></li>
          <li><svg class="tw"><use href="#tri-r"/></svg><svg class="ic"><use href="#phome"/></svg><span>Project Home</span></li>
          <li><svg class="tw"><use href="#tri-r"/></svg><svg class="ic"><use href="#home"/></svg><span>Home</span></li>
          <li><svg class="tw"><use href="#tri-r"/></svg><svg class="ic"><use href="#folder"/></svg><span>C:\</span></li>
          <li><svg class="tw"><use href="#tri-r"/></svg><svg class="ic"><use href="#folder"/></svg><span>D:\</span></li>
          <li><i class="tw"></i><svg class="ic"><use href="#gpkg"/></svg><span>GeoPackage</span></li>
          <li><i class="tw"></i><svg class="ic"><use href="#feather"/></svg><span>SpatiaLite</span></li>
          <li><i class="tw"></i><svg class="ic"><use href="#pg"/></svg><span>PostGIS</span></li>
          <li><i class="tw"></i><svg class="ic"><use href="#mssql"/></svg><span>MSSQL</span></li>
          <li><i class="tw"></i><svg class="ic"><use href="#oracle"/></svg><span>Oracle</span></li>
          <li><i class="tw"></i><svg class="ic"><use href="#db2"/></svg><span>DB2</span></li>
          <li><svg class="tw"><use href="#tri-r"/></svg><svg class="ic"><use href="#wms"/></svg><span>WMS/WMTS</span></li>
          <li><i class="tw"></i><svg class="ic"><use href="#grid"/></svg><span>Vector Tiles</span></li>
          <li><i class="tw"></i><svg class="ic"><use href="#grid"/></svg></li>
        </ul>
        <div class="scroll"><button aria-label="Scroll up"><svg><use href="#tri-u"/></svg></button><i class="thumb"></i><i class="trough"></i><button aria-label="Scroll down"><svg><use href="#tri-d"/></svg></button></div>
      </div>
    </section>

    <section class="dock dock-layers">
      <header><h2>Layers</h2><button aria-label="Float"><svg><use href="#float"/></svg></button><button aria-label="Close"><svg><use href="#close"/></svg></button></header>
      <div class="tools">
        <button aria-label="Layer Styling"><svg><use href="#brush"/></svg></button>
        <button aria-label="Add Group"><svg><use href="#group"/></svg></button>
        <button aria-label="Map Themes"><svg><use href="#eye"/></svg></button>
        <button aria-label="Filter Legend"><svg><use href="#filter"/></svg></button>
        <button aria-label="Filter by Expression"><svg><use href="#expr"/></svg></button>
        <button class="dd" aria-label="Expression options"><svg><use href="#tri-d"/></svg></button>
        <button aria-label="Expand All"><svg><use href="#down"/></svg></button>
        <button aria-label="Collapse All"><svg><use href="#up"/></svg></button>
        <button aria-label="Remove Layer"><svg><use href="#rem"/></svg></button>
      </div>
      <div class="view">
        <ul class="tree layers">
          <li><i class="tw"></i><input type="checkbox" id="l1"><i class="fill orange"></i><label for="l1">TFP_Scharnitz_Building_Clip</label></li>
          <li><i class="tw"></i><input type="checkbox" id="l2"><i class="fill pink"></i><label for="l2">TFP_Scharnitz_Water_Clip</label></li>
          <li><i class="tw"></i><input type="checkbox" id="l3"><i class="line mauve"></i><label for="l3">TFP_Scharnitz_Power_Clip</label></li>
          <li><i class="tw"></i><input type="checkbox" id="l4"><i class="line rose"></i><label for="l4">TFP_Scharnitz_Track_Clip</label></li>
          <li><i class="tw"></i><input type="checkbox" id="l5"><i class="line sage"></i><label for="l5">TFP_Scharnitz_Road-Service_Clip</label></li>
          <li><i class="tw"></i><input type="checkbox" id="l6"><i class="line olive"></i><label for="l6">TFP_Scharnitz_Road-Residential_Clip</label></li>
          <li><i class="tw"></i><input type="checkbox" id="l7"><i class="line taupe"></i><label for="l7">TFP_Scharnitz_Road-Tertiary_Clip</label></li>
          <li><i class="tw"></i><input type="checkbox" id="l8"><i class="line mint"></i><label for="l8">TFP_Scharnitz_Road-Primary_Clip</label></li>
          <li class="current"><i class="tw"></i><input type="checkbox" id="l9" checked><i class="line rail"></i><label for="l9">TFP_Scharnitz_Rail_Clip</label><i class="mark"></i></li>
          <li><i class="tw"></i><input type="checkbox" id="l10"><i class="fill purple"></i><label for="l10">TFP_Scharnitz_AOI_SqB</label></li>
          <li><i class="tw"></i><input type="checkbox" id="l11"><i class="fill rust"></i><label for="l11">TFP_Scharnitz_AOI_Sq</label></li>
          <li><i class="tw"></i><input type="checkbox" id="l12"><svg class="ic"><use href="#raster"/></svg><label for="l12">TFP_T2_Scharnitz_DTM_1m</label></li>
          <li><svg class="tw"><use href="#tri-d"/></svg><input type="checkbox" id="l13"><svg class="ic"><use href="#raster"/></svg><label for="l13">Google Satellite</label></li>
        </ul>
      </div>
    </section>
  </aside>

  <div class="map">
    <svg viewBox="509 168 1409 882" preserveAspectRatio="xMinYMin meet" role="img" aria-label="Railway line">
      <g fill="none" stroke="#b8484f">
        <path d="M1290 189L1296 240Q1299 264 1293 287L1277 362Q1272 386 1267 399Q1262 413 1252 425L1164 533Q1149 552 1127 564Q1110 572 1090 572L972 560Q955 559 937 566Q905 576 884 590L853 609Q842 616 833 629L807 666Q799 678 793 691"/>
        <path d="M1293 287L1286 309L1270 380M1289 303L1271 383M1286 305L1270 382M1291 297L1274 371"/>
      </g>
    </svg>
  </div>
</main>

<footer class="status">
  <div class="locate"><svg viewBox="0 0 16 16"><circle cx="6.500" cy="6.500" r="4.500" fill="none" stroke="#777" stroke-width="1.500"/><path d="M10 10l4 4" stroke="#777" stroke-width="1.500"/></svg><input type="text" placeholder="Type to locate (Ctrl+K)" aria-label="Locate"></div>
  <label class="field">Coordinate <input class="coord" type="text" value="67243,250708"></label>
  <button class="plain" aria-label="Toggle extents"><svg viewBox="0 0 16 16"><path d="M2 2l5 12M5 1l6 13M9 1l5 11M2 6l5-4M2 9l8-7M4 12l10-6" stroke="#333"/><ellipse cx="8" cy="9" rx="4" ry="6" fill="none" stroke="#333"/></svg></button>
  <label class="field">Scale <select><option>1:16040</option></select></label>
  <button class="plain lock" aria-label="Lock scale"><svg viewBox="0 0 16 16"><path d="M4.500 8V4c0-4 7-4 7 0v4" fill="none" stroke="#888" stroke-width="1.500"/><path d="M2 7h12v8H2z" fill="#555"/></svg></button>
  <label class="field">Magnifier <span class="spin"><input type="text" value="100%"><svg viewBox="0 0 14 20"><path d="M3 8h8L7 4zM3 12h8l-4 4z" fill="#555"/></svg></span></label>
  <label class="field rot">Rotation <span class="spin"><input type="text" value="0.0 °"><svg viewBox="0 0 14 20"><path d="M3 8h8L7 4zM3 12h8l-4 4z" fill="#555"/></svg></span></label>
  <label class="render"><input type="checkbox" checked>Render</label>
  <button class="plain crs"><svg viewBox="0 0 16 16"><circle cx="8" cy="8" r="6" fill="#ccc" stroke="#777"/><ellipse cx="8" cy="8" rx="3" ry="6" fill="none" stroke="#777"/><path d="M1 8h14M3 5h10M3 11h10M8 2v12" stroke="#777"/></svg>EPSG:31254</button>
  <button class="plain" aria-label="Messages"><svg viewBox="0 0 16 16"><path d="M8 1c4 0 7 3 7 6s-1 4-3 5l1 3-4-2c-4 0-8-2-8-6s3-6 7-6z" fill="#555"/><path d="M4 7h2M7 7h2M10 7h2" stroke="#fff" stroke-width="1.500"/></svg></button>
</footer>

<div class="menu context" role="menu">
  <button><svg><use href="#zlay"/></svg><span><u>Z</u>oom to Layer</span></button>
  <button disabled><svg class="dim"><use href="#zlay"/></svg><span><u>Z</u>oom to Selection</span></button>
  <button><svg><use href="#glasses"/></svg><span><u>S</u>how in Overview</span></button>
  <button><i class="box"></i><span>Show Feature Count</span></button>
  <button><span>Copy Layer</span></button>
  <button><span>Re<u>n</u>ame Layer</span></button>
  <hr>
  <button><svg><use href="#dup"/></svg><span><u>D</u>uplicate Layer</span></button>
  <button><svg><use href="#rem"/></svg><span><u>R</u>emove Layer...</span></button>
  <hr>
  <button><span>Move to <u>T</u>op</span></button>
  <button><span>Move to <u>B</u>ottom</span></button>
  <hr>
  <button><svg><use href="#table"/></svg><span><u>O</u>pen Attribute Table</span></button>
  <button><svg><use href="#pencil"/></svg><span>Toggle Editing</span></button>
  <button><span><u>F</u>ilter...</span></button>
  <button><span>Change Data Source...</span></button>
  <hr>
  <button><span><u>S</u>et Layer Scale Visibility...</span></button>
  <button class="sub"><span>Set CRS</span><svg><use href="#tri-r"/></svg></button>
  <hr>
  <button class="sub hot"><span>Export</span><svg><use href="#tri-r"/></svg><i class="mark"></i></button>
  <hr>
  <button class="sub"><span>Styles</span><svg><use href="#tri-r"/></svg></button>
  <button><span><u>P</u>roperties...</span></button>
</div>

<div class="menu submenu" role="menu">
  <button class="hot"><span>Save Features As...</span><i class="mark"></i></button>
  <button disabled><span>Save Selected Features As...</span></button>
  <button><span>Save as Layer Definition File...</span></button>
  <button><span>Save as QGIS Layer Style File...</span></button>
</div>
</body>
</html>
```

FILE: styles.css
```css
* { box-sizing: border-box; }

body {
  margin: 0;
  height: 100vh;
  min-height: 800px;
  display: flex;
  flex-direction: column;
  position: relative;
  overflow: hidden;
  border-right: 2px solid #6e6e6e;
  background: #efefef;
  color: #000;
  font: 11px/16px "Open Sans", "Noto Sans", sans-serif;
}

button, input, select { font: inherit; color: inherit; }
button { border: 0; padding: 0; background: none; }
h1, h2, p, ul { margin: 0; padding: 0; font-size: 11px; font-weight: 400; list-style: none; }
.defs { display: none; }
.ic { width: 16px; height: 16px; flex: none; }

/* title bar and menus */
.titlebar { flex: none; height: 23px; display: flex; align-items: center; gap: 5px; padding-left: 2px; background: #a5a5a5; }
.winctl { margin-left: auto; display: flex; }
.winctl button { width: 45px; height: 20px; }
.winctl svg { width: 12px; height: 12px; }

.menubar { flex: none; height: 20px; display: flex; align-items: center; gap: 15px; padding: 0 10px; border-bottom: 1px solid #d2d2d2; background: #eee; }

/* toolbars */
.toolbar { flex: none; height: 31px; display: flex; align-items: center; border-bottom: 1px solid #b6b6b6; background: linear-gradient(#fbfbfb, #efefef); }
.toolbar button, .tools button { flex: none; width: 25px; height: 24px; display: flex; align-items: center; justify-content: center; }
.toolbar button svg, .tools button svg { flex: none; width: 16px; height: 16px; }
.toolbar button.dd, .tools button.dd { width: 12px; color: #555; }
.toolbar button.dd:disabled { color: #999; }
.toolbar button.dd svg, .tools button.dd svg { width: 8px; height: 8px; }
.toolbar button.on { border: 1px solid #969696; border-radius: 3px; background: #d9d9d9; }
.grip { flex: none; width: 5px; height: 19px; margin: 0 3px 0 8px; background: radial-gradient(circle at 1px 1px, #c6c6c6 1px, transparent 1px) 0 0 / 3px 3px; }
.grip:first-child { margin-left: 4px; }
.sep { flex: none; width: 1px; height: 14px; margin: 0 3px; background: #cfcfcf; }

/* docks */
.work { flex: 1; min-height: 0; display: flex; }
.side { flex: none; width: 508px; padding-right: 6px; display: flex; flex-direction: column; }
.dock { min-height: 0; display: flex; flex-direction: column; }
.dock-cad { flex: 252 1 0; }
.dock-browser { flex: 308 1 0; padding-bottom: 5px; }
.dock-layers { flex: 320 1 0; }
.dock header { flex: none; height: 22px; display: flex; align-items: center; gap: 2px; padding: 0 2px 0 4px; }
.dock-cad header { height: 20px; }
.dock h2 { flex: 1; }
.dock header button { width: 12px; height: 12px; display: flex; }
.dock header svg { width: 12px; height: 12px; }
.tools { flex: none; height: 26px; display: flex; align-items: center; padding-left: 3px; }
.dock-cad .tools { height: 28px; }
.tools .sep { margin: 0 3px 0 4px; }
.note { flex: 1; display: flex; align-items: center; justify-content: center; padding-top: 3px; font: 11px/16px "DejaVu Sans Condensed", "DejaVu Sans", sans-serif; }
.split { flex: none; align-self: center; width: 18px; height: 4px; background: radial-gradient(circle at 1px 1px, #c6c6c6 1px, transparent 1px) 0 0 / 3px 3px; }

.view { flex: 1; min-height: 0; margin-top: 3px; display: flex; border: 1px solid #acacac; background: #fff; overflow: hidden; }
.tree { flex: 1; min-width: 0; padding-top: 1px; }
.tree li { position: relative; height: 18px; display: flex; align-items: center; }
.tree li span { margin-left: 6px; white-space: nowrap; }
.tw { flex: none; width: 8px; height: 8px; margin: 0 9px 0 6px; color: #555; }

.scroll { flex: none; width: 14px; display: flex; flex-direction: column; border-left: 1px solid #b4b4b4; background: #fff; }
.scroll button { flex: none; height: 14px; display: flex; align-items: center; justify-content: center; color: #555; }
.scroll svg { width: 8px; height: 8px; }
.thumb { flex: 145; border: solid #b4b4b4; border-width: 1px 0; }
.trough { flex: 83; background: #dfdfdf; border-bottom: 1px solid #b4b4b4; }

input[type="checkbox"] { appearance: none; flex: none; width: 14px; height: 14px; margin: 0; border: 1px solid #b4b4b4; background: #fff; }
input[type="checkbox"]:checked { display: grid; place-items: center; }
input[type="checkbox"]:checked::before { content: ""; width: 9px; height: 9px; background: #000; clip-path: polygon(0 45%, 20% 40%, 38% 65%, 85% 0, 100% 5%, 45% 100%, 30% 100%); }

.layers label { margin-left: 6px; color: #747474; font-size: 12px; font-weight: 700; font-style: italic; white-space: nowrap; }
.layers .ic, .fill, .line { margin-left: 6px; }
.fill { flex: none; width: 16px; height: 16px; border: 1px solid #00000066; }
.line { flex: none; width: 16px; height: 2px; }
.orange { background: #ff9e17; }
.pink { background: #e8718d; }
.purple { background: #987db7; }
.rust { background: #e77148; }
.mauve { background: #d0b0ce; }
.rose { background: #f3d3da; }
.sage { background: #bdcabc; }
.olive { background: #d9dba3; }
.taupe { background: #c9bcb4; }
.mint { background: #cbd8c9; }
.rail { background: #4c76ad; }
.layers .current { background: #117cda; }
.layers .current label { color: #fff; font-size: 11px; font-style: normal; text-decoration: underline; }

/* hand-drawn highlights */
.mark { position: absolute; z-index: 2; border: 2px solid #dc1414; border-radius: 50%; pointer-events: none; }
.current .mark { left: 50px; top: -8px; width: 166px; height: 34px; }
.context .mark { left: 4px; top: -6px; width: 80px; height: 34px; }
.submenu .mark { left: 16px; top: -6px; width: 120px; height: 34px; }

/* map */
.map { flex: 1; min-width: 0; border: 1px solid #acacac; border-right: 0; background: #fff; overflow: hidden; }
.map svg { display: block; width: 100%; height: 100%; }

/* status bar */
.status { flex: none; height: 28px; display: flex; align-items: center; padding: 1px 5px 0 4px; }
.status input[type="text"], .status select { height: 22px; border: 1px solid #b0b0b0; border-radius: 2px; padding: 0 5px; background: #fff; outline: 0; }
.locate { width: 200px; margin-right: auto; display: grid; align-items: center; }
.locate svg { grid-area: 1 / 1; z-index: 1; width: 14px; height: 14px; margin-left: 8px; }
.locate input[type="text"] { grid-area: 1 / 1; width: 100%; padding-left: 27px; }
.locate input::placeholder { color: #777; opacity: 1; }
.field { display: flex; align-items: center; gap: 3px; }
.status .coord { width: 85px; text-align: center; padding: 0; }
.plain { display: flex; align-items: center; margin: 0 11px 0 4px; }
.plain svg { width: 16px; height: 16px; }
.plain:last-child { margin: 0; }
.lock { margin: 0 4px 0 11px; }
.status select {
  appearance: none;
  width: 80px;
  padding: 0 4px;
  background:
    linear-gradient(#b0b0b0 0 0) 60px 0 / 1px 100% no-repeat,
    linear-gradient(to bottom left, #555 50%, transparent 50%) 66px 8px / 4px 5px no-repeat,
    linear-gradient(to bottom right, #555 50%, transparent 50%) 70px 8px / 4px 5px no-repeat,
    #fff;
}
.spin { display: flex; width: 87px; border: 1px solid #b0b0b0; border-radius: 2px; background: #fff; height: 22px; }
.rot .spin { width: 83px; }
.rot { margin-left: 7px; gap: 9px; }
.status .spin input { flex: 1; min-width: 0; height: 20px; border: 0; border-right: 1px solid #b0b0b0; }
.spin svg { width: 14px; height: 20px; background: #f2f2f2; }
.render { display: flex; align-items: center; gap: 3px; margin: 0 15px 0 7px; }
.crs { gap: 4px; margin: 0 18px 0 0; }

/* context menus */
.menu { position: absolute; z-index: 5; display: flex; flex-direction: column; background: #fff; box-shadow: inset 0 0 0 1px #979797, 3px 3px 3px #0007; }
.context { left: 232px; top: 485px; width: 230px; }
.submenu { left: 461px; top: 863px; width: 217px; z-index: 6; }
.menu button { position: relative; height: 23px; display: flex; align-items: center; padding-left: 28px; text-align: left; }
.menu button > svg:first-child { width: 16px; height: 16px; margin: 0 5px 0 -21px; }
.menu .box { width: 14px; height: 14px; margin: 0 6px 0 -20px; border: 1px solid #bbb; }
.menu button:disabled { color: #7e7e7e; }
.menu .dim { opacity: 0.35; filter: grayscale(1); }
.menu .sub svg { width: 8px; height: 8px; margin: 0 4px 0 auto; color: #555; }
.menu .hot, .menu .hot svg { color: #fff; }
.menu .hot { background: #0078d7; }
.menu hr { flex: none; width: 220px; height: 2px; margin: 0 5px; border: 0; border-top: 1px solid #bdbdbd; }
```
